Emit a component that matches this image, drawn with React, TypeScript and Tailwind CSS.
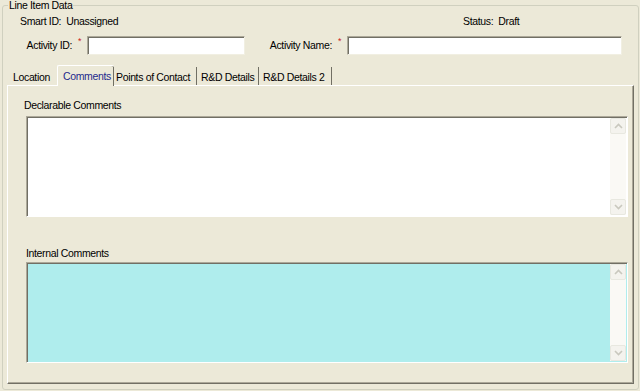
const ScrollBtn = ({ dir }: { dir: "up" | "down" }) => (
  <div className="flex h-[16px] w-[16px] items-center justify-center rounded-[2px] border border-[#E8E8E0] bg-[#F4F3EE]">
    <svg width="9" height="6" viewBox="0 0 9 6">
      <path
        d={dir === "up" ? "M1 5 L4.5 1.5 L8 5" : "M1 1 L4.5 4.5 L8 1"}
        fill="none"
        stroke="#C9C8BE"
        strokeWidth="1.6"
      />
    </svg>
  </div>
);

const CommentBox = ({ bg }: { bg: string }) => (
  <div
    className={`ml-[18px] flex h-[101px] w-[602px] border border-t-[#ACA899] border-l-[#ACA899] border-b-white border-r-white shadow-[inset_1px_1px_0_#716F64] ${bg}`}
  >
    <div className="flex-1" />
    <div className="my-[1px] mr-[1px] flex w-[16px] flex-col justify-between bg-[#FAF9F5]">
      <ScrollBtn dir="up" />
      <ScrollBtn dir="down" />
    </div>
  </div>
);

const Field = ({
  label,
  labelWidth,
  inputWidth,
}: {
  label: string;
  labelWidth: string;
  inputWidth: string;
}) => (
  <div className="flex h-[19px] items-center">
    <div className={`${labelWidth} text-right`}>{label}</div>
    <span className="w-[15px] self-start pt-[1px] text-center text-[9px] leading-[9px] text-[#CC2222]">
      *
    </span>
    <div
      className={`${inputWidth} h-[19px] border border-t-[#ACA899] border-l-[#ACA899] border-b-[#F1EFE2] border-r-[#F1EFE2] bg-white shadow-[inset_1px_1px_0_#716F64]`}
    />
  </div>
);

const tabs = [
  { t: "Location", cls: "w-[49px] pl-[5px]" },
  { t: "Comments", cls: "w-[57px] pl-[5px]" },
  { t: "Points of Contact", cls: "w-[83px] pl-[2px] border-r border-[#716F64]" },
  { t: "R&D Details", cls: "w-[62px] pl-[4px] border-r border-[#716F64]" },
  { t: "R&D Details 2", cls: "w-[73px] pl-[4px] border-r border-[#716F64]" },
];

export default function App() {
  return (
    <div className="h-[391px] w-[640px] overflow-hidden bg-[#ECE9D8] font-['Liberation_Sans',Arial,sans-serif] text-[10.5px] leading-[13px] tracking-[-0.35px] text-black">
      <fieldset className="ml-[2px] h-[390px] w-[637px] rounded-[3px] border border-[#D0D0BF] p-0">
        <legend className="ml-[5px] px-[1px] leading-[11px]">Line Item Data</legend>

        <div className="mt-[4px] flex h-[13px] pl-[17px]">
          <div className="w-[443px]">Smart ID:&nbsp; Unassigned</div>
          <div>Status:&nbsp; Draft</div>
        </div>

        <div className="mt-[8px] flex">
          <Field label="Activity ID:" labelWidth="w-[69px]" inputWidth="w-[158px]" />
          <Field label="Activity Name:" labelWidth="w-[87px]" inputWidth="w-[275px]" />
        </div>

        <div className="ml-[4px] mt-[10px] w-[627px]">
          <div className="flex h-[20px] items-end pl-[1px]">
            {tabs.map((tab, i) =>
              i === 1 ? (
                <div
                  key={tab.t}
                  className={`relative z-10 -mb-[1px] flex h-[21px] items-start rounded-t-[2px] border-l border-t border-white bg-[#ECE9D8] pt-[4px] text-[#1E2A8C] shadow-[inset_-1px_0_0_#716F64] ${tab.cls}`}
                >
                  {tab.t}
                </div>
              ) : (
                <div key={tab.t} className={`flex h-[18px] items-start pt-[4px] ${tab.cls}`}>
                  {tab.t}
                </div>
              )
            )}
          </div>

          <div className="h-[299px] border border-t-white border-l-white border-r-[#716F64] border-b-[#716F64] shadow-[inset_-1px_-1px_0_#ACA899]">
            <div className="ml-[16px] mt-[13px]">Declarable Comments</div>
            <div className="mt-[4px]">
              <CommentBox bg="bg-white" />
            </div>
            <div className="ml-[18px] mt-[30px]">Internal Comments</div>
            <div className="mt-[2px]">
              <CommentBox bg="bg-[#AFEDED]" />
            </div>
          </div>
        </div>
      </fieldset>
    </div>
  );
}
